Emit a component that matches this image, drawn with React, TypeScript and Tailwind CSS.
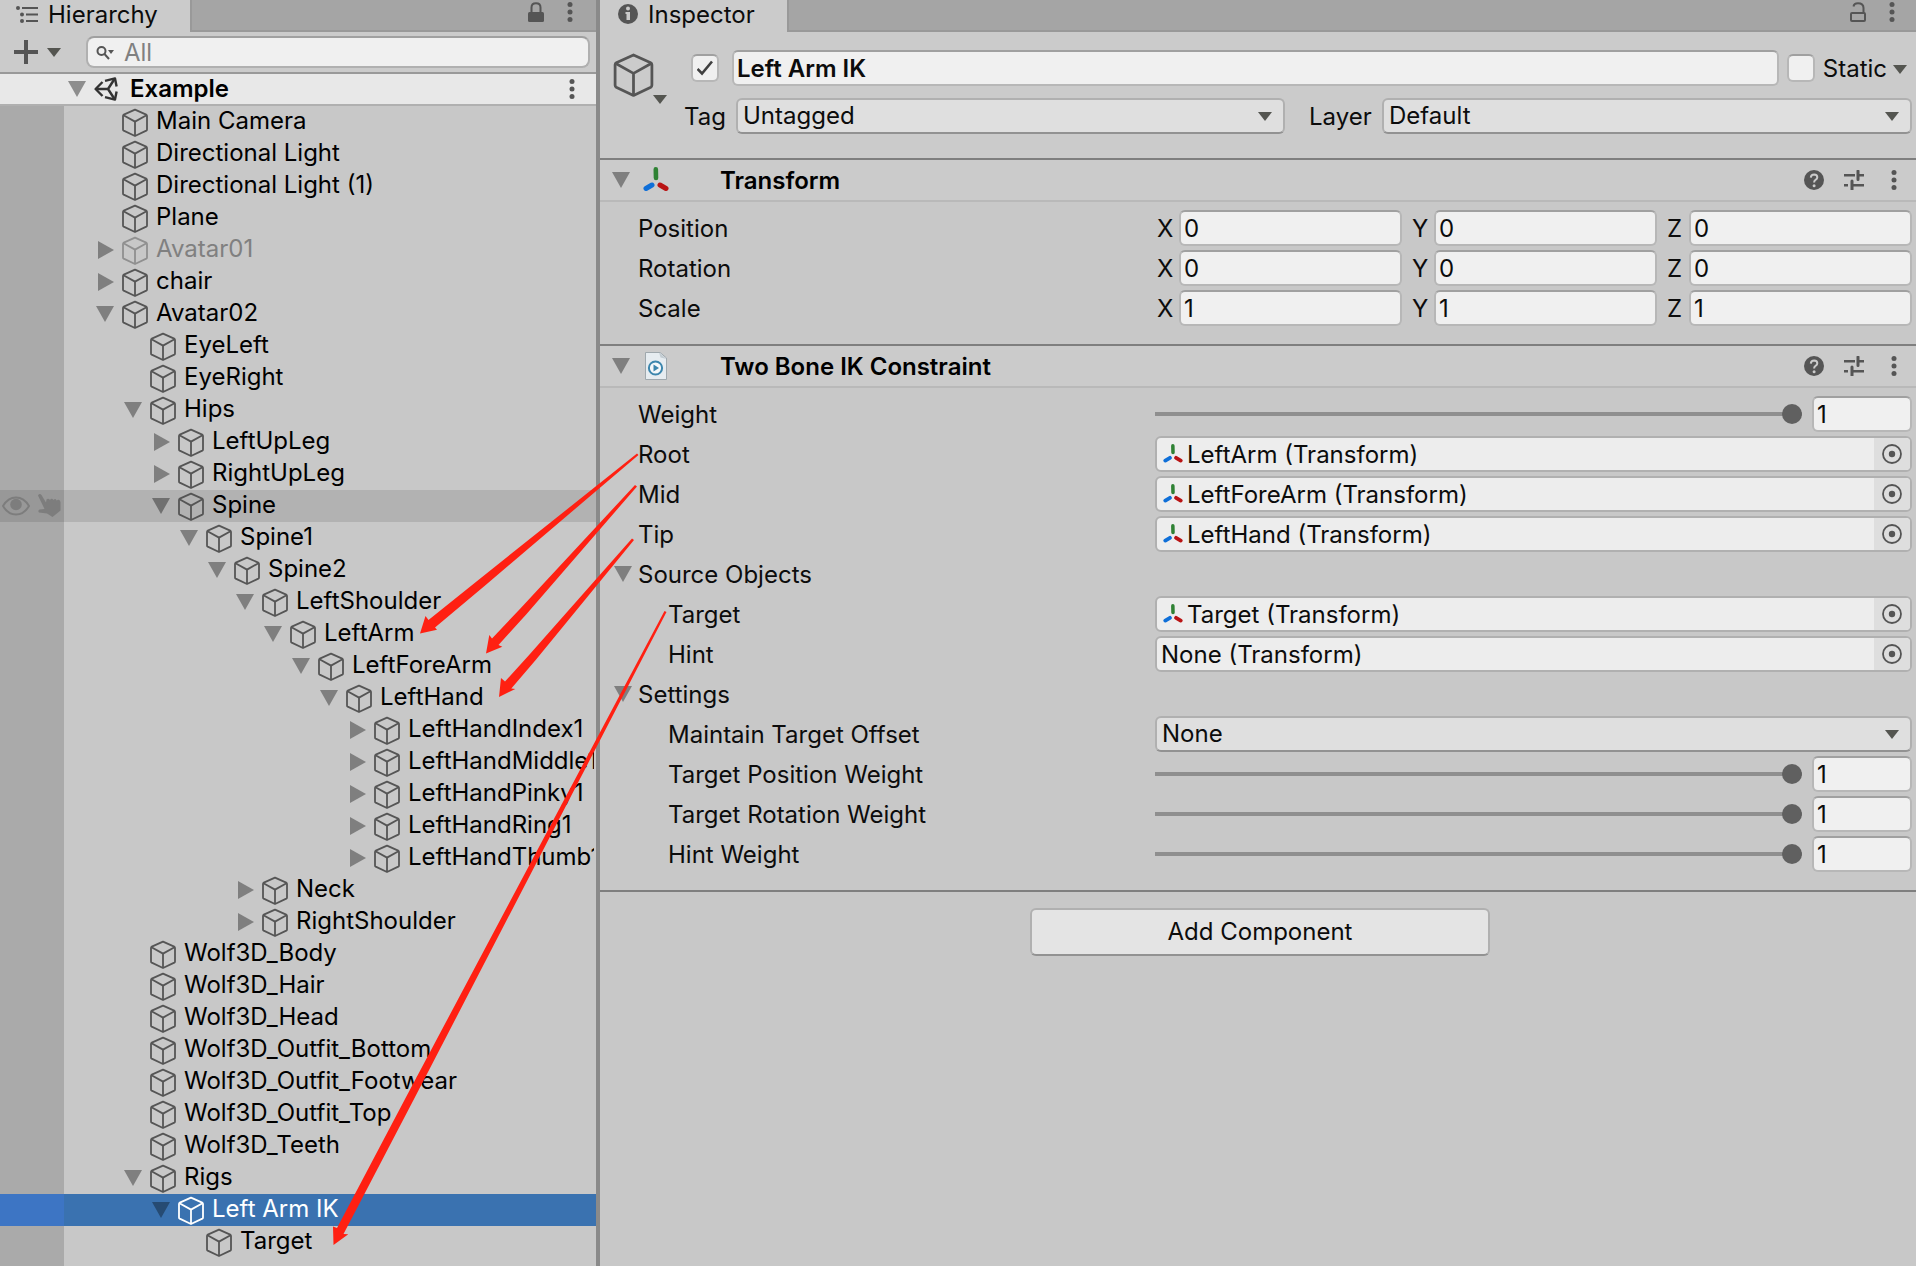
import { useState } from 'react';
import type { ReactNode } from 'react';

type TreeNode = {
  name: string;
  level: number;
  fold?: 'open' | 'closed';
  inactive?: boolean;
  state?: 'hover' | 'selected';
};

const nodes: TreeNode[] = [
  { name: 'Main Camera', level: 0 },
  { name: 'Directional Light', level: 0 },
  { name: 'Directional Light (1)', level: 0 },
  { name: 'Plane', level: 0 },
  { name: 'Avatar01', level: 0, fold: 'closed', inactive: true },
  { name: 'chair', level: 0, fold: 'closed' },
  { name: 'Avatar02', level: 0, fold: 'open' },
  { name: 'EyeLeft', level: 1 },
  { name: 'EyeRight', level: 1 },
  { name: 'Hips', level: 1, fold: 'open' },
  { name: 'LeftUpLeg', level: 2, fold: 'closed' },
  { name: 'RightUpLeg', level: 2, fold: 'closed' },
  { name: 'Spine', level: 2, fold: 'open', state: 'hover' },
  { name: 'Spine1', level: 3, fold: 'open' },
  { name: 'Spine2', level: 4, fold: 'open' },
  { name: 'LeftShoulder', level: 5, fold: 'open' },
  { name: 'LeftArm', level: 6, fold: 'open' },
  { name: 'LeftForeArm', level: 7, fold: 'open' },
  { name: 'LeftHand', level: 8, fold: 'open' },
  { name: 'LeftHandIndex1', level: 9, fold: 'closed' },
  { name: 'LeftHandMiddle1', level: 9, fold: 'closed' },
  { name: 'LeftHandPinky1', level: 9, fold: 'closed' },
  { name: 'LeftHandRing1', level: 9, fold: 'closed' },
  { name: 'LeftHandThumb1', level: 9, fold: 'closed' },
  { name: 'Neck', level: 5, fold: 'closed' },
  { name: 'RightShoulder', level: 5, fold: 'closed' },
  { name: 'Wolf3D_Body', level: 1 },
  { name: 'Wolf3D_Hair', level: 1 },
  { name: 'Wolf3D_Head', level: 1 },
  { name: 'Wolf3D_Outfit_Bottom', level: 1 },
  { name: 'Wolf3D_Outfit_Footwear', level: 1 },
  { name: 'Wolf3D_Outfit_Top', level: 1 },
  { name: 'Wolf3D_Teeth', level: 1 },
  { name: 'Rigs', level: 1, fold: 'open' },
  { name: 'Left Arm IK', level: 2, fold: 'open', state: 'selected' },
  { name: 'Target', level: 3 },
];

// Icons

function Cube({ className }: { className: string }) {
  return (
    <svg className={className} viewBox="0 0 28 30" fill="none" stroke="currentColor" strokeWidth="1.8" strokeLinejoin="round">
      <path d="M14 2.6 25.2 7.6Q26 8 26 9V22.400Q26 23.200 25.300 23.600L14 29 2.700 23.600Q2 23.200 2 22.400V9Q2 8 2.800 7.600Z" />
      <path d="M2.500 8.200 14 14.600 25.500 8.200M14 14.600V28.800" />
    </svg>
  );
}

function Triangle({ open, className = '' }: { open: boolean; className?: string }) {
  return (
    <svg className={`size-[18px] ${className}`} viewBox="0 0 18 18" fill="currentColor">
      {open ? <path d="M0 1H18L9 17Z" /> : <path d="M2 0V18L18 9Z" />}
    </svg>
  );
}

function Caret({ className = '' }: { className?: string }) {
  return (
    <svg className={`h-[9px] w-[14px] shrink-0 text-[#545550] ${className}`} viewBox="0 0 14 9" fill="currentColor">
      <path d="M0 0H14L7 9Z" />
    </svg>
  );
}

function Dots() {
  return (
    <svg className="h-5 w-1.5" viewBox="0 0 6 20" fill="#555">
      <circle cx="3" cy="2.6" r="2.5" />
      <circle cx="3" cy="10" r="2.5" />
      <circle cx="3" cy="17.4" r="2.5" />
    </svg>
  );
}

function Axes({ className }: { className: string }) {
  return (
    <svg className={className} viewBox="0 0 26 26" strokeLinecap="round">
      <path d="M12.8 2.4 13 11" stroke="#2f8234" strokeWidth="4.6" />
      <path d="M9 18 3 21.500" stroke="#0f6fd8" strokeWidth="5" />
      <path d="M17 18 23 21.500" stroke="#b91414" strokeWidth="5" />
    </svg>
  );
}

function ScriptIcon() {
  return (
    <svg className="h-7 w-[22px]" viewBox="0 0 22 28">
      <path d="M.5 .5H15L21.500 6V27.500H.5Z" fill="#e6ecf0" stroke="#9fa8ad" />
      <path d="M14 .5 15.500 5.500 21.500 7Z" fill="#c3ccd2" />
      <circle cx="10.500" cy="16" r="6.600" fill="#f4f8fa" stroke="#3c86ad" strokeWidth="2" />
      <path d="M8.500 12.500 14 16 8.500 19.500Z" fill="#3c86ad" />
    </svg>
  );
}

function HelpIcon() {
  return (
    <svg className="size-5" viewBox="0 0 20 20" fill="none">
      <circle cx="10" cy="10" r="10" fill="#555" />
      <path d="M6.800 7.600Q7 4.400 10.200 4.400 13.300 4.500 13.300 7.300 13.300 8.900 11.500 9.900 10.100 10.700 10.100 12.600" stroke="#cbcbcb" strokeWidth="2" />
      <circle cx="10.100" cy="15.700" r="1.500" fill="#cbcbcb" />
    </svg>
  );
}

function PresetIcon() {
  return (
    <svg className="size-5" viewBox="0 0 20 20" fill="none" stroke="#555" strokeWidth="2.400">
      <path d="M0 5.200H11M14 5.200H20M0 15.200H4M8 15.200H20" />
      <path d="M14 1V9.500M8 11V19.500" strokeWidth="3" strokeLinecap="round" />
    </svg>
  );
}

function LockIcon({ locked }: { locked: boolean }) {
  return locked ? (
    <svg className="h-5 w-4" viewBox="0 0 16 20">
      <path d="M3.500 11V5.500Q3.500 1.200 8 1.200T12.500 5.500V11" fill="none" stroke="#555" strokeWidth="2" />
      <rect y="10" width="16" height="10" rx="1.500" fill="#555" />
    </svg>
  ) : (
    <svg className="h-5 w-4" viewBox="0 0 16 20" fill="none" stroke="#555" strokeWidth="2">
      <path d="M3.500 4.500Q4 1.200 8 1.200 13.500 1.200 13.500 6V11" />
      <rect x="1" y="11" width="14" height="8" rx="1" />
    </svg>
  );
}

// Shared controls

const fieldClass =
  'h-9 w-full min-w-0 rounded-md border-2 border-[#b7b7b7] border-t-[#a0a0a0] bg-[#f0f0f0] px-[3px] text-[24px] leading-8 text-[#0c0c0c] outline-none';

function Tab({ icon, title }: { icon: ReactNode; title: string }) {
  return (
    <div className="relative z-10 flex h-8 items-start gap-2.5 border-r-2 border-[#999] bg-[#cbcbcb] pr-8 pl-4">
      <span className="flex h-7 items-center">{icon}</span>
      <h2 className="leading-[30px]">{title}</h2>
    </div>
  );
}

function Select({ id, value, className = '' }: { id: string; value: string; className?: string }) {
  return (
    <div className={`relative ${className}`}>
      <select
        id={id}
        className="h-9 w-full appearance-none rounded-md border-2 border-[#b0b0b0] border-b-[#929292] bg-[#dfdfdf] px-[5px] text-[24px] leading-8 text-[#0c0c0c] outline-none"
      >
        <option>{value}</option>
      </select>
      <Caret className="pointer-events-none absolute top-3.5 right-[13px]" />
    </div>
  );
}

function CheckBox({ id, label, defaultChecked }: { id: string; label: string; defaultChecked?: boolean }) {
  return (
    <span className="relative size-7 shrink-0">
      <input
        id={id}
        type="checkbox"
        aria-label={label}
        defaultChecked={defaultChecked}
        className="peer block size-7 appearance-none rounded-md border-2 border-[#b7b7b7] border-t-[#a0a0a0] bg-[#f0f0f0]"
      />
      <svg
        className="pointer-events-none absolute top-1.5 left-1.5 hidden size-4 peer-checked:block"
        viewBox="0 0 16 16"
        fill="none"
        stroke="#404040"
        strokeWidth="2.600"
      >
        <path d="M.5 9 5 13.500 15 1.500" />
      </svg>
    </span>
  );
}

function Row({ label, htmlFor, nested, children }: { label: string; htmlFor?: string; nested?: boolean; children: ReactNode }) {
  return (
    <div className="grid h-9 grid-cols-[517fr_757fr] items-center pr-1 pl-[38px]">
      <label htmlFor={htmlFor} className={`pt-0.5 ${nested ? 'pl-[30px]' : ''}`}>
        {label}
      </label>
      {children}
    </div>
  );
}

function VectorRow({ label, value }: { label: string; value: string }) {
  return (
    <Row label={label}>
      <div className="grid grid-cols-3 gap-2">
        {['X', 'Y', 'Z'].map((axis) => (
          <label key={axis} className="flex items-center">
            <span className="w-6 shrink-0 pt-0.5 pl-0.5">{axis}</span>
            <input className={fieldClass} defaultValue={value} aria-label={`${label} ${axis}`} />
          </label>
        ))}
      </div>
    </Row>
  );
}

function SliderRow({ label, nested }: { label: string; nested?: boolean }) {
  const [value, setValue] = useState('1');
  const id = label.toLowerCase().replace(/ /g, '-');

  return (
    <Row label={label} htmlFor={id} nested={nested}>
      <div className="flex items-center gap-2.5">
        <input
          id={id}
          type="range"
          min="0"
          max="1"
          step="0.01"
          value={value}
          onChange={(e) => setValue(e.target.value)}
          className="h-5 min-w-0 flex-1 appearance-none bg-transparent bg-[linear-gradient(#8f8f8f,#8f8f8f)] bg-[length:100%_4px] bg-center bg-no-repeat [&::-webkit-slider-thumb]:size-5 [&::-webkit-slider-thumb]:appearance-none [&::-webkit-slider-thumb]:rounded-full [&::-webkit-slider-thumb]:bg-[#606060]"
        />
        <div className="w-[100px]">
          <input className={fieldClass} value={value} aria-label={`${label} value`} onChange={(e) => setValue(e.target.value)} />
        </div>
      </div>
    </Row>
  );
}

function ObjectRow({ label, value, nested }: { label: string; value: string | null; nested?: boolean }) {
  return (
    <Row label={label} nested={nested}>
      <div className="flex h-9 overflow-hidden rounded-md border-2 border-[#b0b0b0] bg-[#ededed] text-[#0c0c0c]">
        <span className="flex flex-1 items-center gap-1 pl-1">
          {value && <Axes className="ml-0.5 size-5" />}
          <span className="pt-0.5">{value ?? 'None'} (Transform)</span>
        </span>
        <button aria-label={`Select ${label}`} className="flex w-9 items-center justify-center bg-[#dedede]">
          <svg className="size-5" viewBox="0 0 20 20">
            <circle cx="10" cy="10" r="9" fill="none" stroke="#555" strokeWidth="1.800" />
            <circle cx="10" cy="10" r="3.200" fill="#555" />
          </svg>
        </button>
      </div>
    </Row>
  );
}

function FoldoutRow({ label }: { label: string }) {
  return (
    <button className="flex h-9 items-center gap-1.5 pl-3.5 text-left">
      <Triangle open className="text-[#7f7f7f]" />
      <span className="pt-0.5">{label}</span>
    </button>
  );
}

function Component({ title, icon, children }: { title: string; icon: ReactNode; children: ReactNode }) {
  return (
    <section className="border-b-2 border-[#7f7f7f]">
      <header className="flex h-[42px] items-center border-b-2 border-[#b9b9b9] bg-[#cbcbcb] pr-[19px] pl-3">
        <Triangle open className="text-[#7f7f7f]" />
        <span className="ml-2.5 flex w-8 justify-center">{icon}</span>
        <h3 className="ml-12 flex-1 pt-0.5 font-semibold text-black">{title}</h3>
        <div className="flex items-center">
          <button aria-label="Help">
            <HelpIcon />
          </button>
          <button aria-label="Presets" className="ml-5">
            <PresetIcon />
          </button>
          <button aria-label="More" className="ml-[27px]">
            <Dots />
          </button>
        </div>
      </header>
      <div className="flex flex-col gap-1 pt-2 pb-[18px]">{children}</div>
    </section>
  );
}

// Panels

function TreeRow({ node }: { node: TreeNode }) {
  const selected = node.state === 'selected';
  const hover = node.state === 'hover';
  const rowBg = selected ? 'bg-[#3a72b0] text-white' : hover ? 'bg-[#b2b2b2] text-black' : 'text-black';
  const gutterBg = selected ? 'bg-[#3d75c4]' : hover ? 'bg-[#989898]' : 'bg-[#aaa]';
  const foldColor = selected ? 'text-[#264b73]' : hover ? 'text-[#707070]' : 'text-[#7f7f7f]';
  const cubeColor = selected ? 'text-white' : node.inactive ? 'text-[#909090]' : 'text-[#555]';

  return (
    <li className={`flex h-8 ${rowBg}`}>
      <span className={`flex w-16 shrink-0 items-center gap-2 pl-0.5 ${gutterBg}`}>
        {hover && (
          <>
            <svg className="h-5 w-7" viewBox="0 0 28 20" fill="none" stroke="#7d7d7d" strokeWidth="2">
              <path d="M1 10Q6 1.500 14 1.500T27 10Q22 18.500 14 18.500T1 10Z" />
              <circle cx="14" cy="8.500" r="5.800" fill="#7d7d7d" stroke="none" />
            </svg>
            <svg className="size-6" viewBox="0 0 24 24" fill="#7d7d7d">
              <path d="M0 1.500Q1.500-1 3.500 1L8 8.500 8.500 5.500Q10.500 4 12 6 13.500 3.500 15.500 6 17.500 4 18.500 6.500 21.500 4.500 22.500 8L22.500 16.500 14.500 23 9 19.500 1 18.500Q-.5 16.500 1.500 15.500L6.500 15Z" />
            </svg>
          </>
        )}
      </span>
      <div className="mr-0.5 flex min-w-0 flex-1 items-center overflow-hidden">
        <span className="w-[26px] shrink-0" />
        {Array.from({ length: node.level }, (_, i) => (
          <span key={i} className="w-7 shrink-0" />
        ))}
        <button aria-label={`Toggle ${node.name}`} className={`flex w-[30px] shrink-0 justify-center ${foldColor}`}>
          {node.fold && <Triangle open={node.fold === 'open'} />}
        </button>
        <Cube className={`mx-px h-[30px] w-7 shrink-0 ${cubeColor}`} />
        <span className={`ml-1.5 h-8 leading-[30px] whitespace-nowrap ${node.inactive ? 'text-[#808080]' : ''}`}>{node.name}</span>
      </div>
    </li>
  );
}

function Hierarchy() {
  return (
    <aside className="w-[600px] shrink-0 border-r-4 border-[#8a8a8a]">
      <div className="flex h-8 items-start justify-between bg-[#a5a5a5] shadow-[inset_0_-2px_#999]">
        <Tab
          title="Hierarchy"
          icon={
            <svg className="h-5 w-[22px]" viewBox="0 0 22 20" fill="#555">
              <circle cx="2" cy="4" r="2" />
              <circle cx="6" cy="10.500" r="2" />
              <circle cx="6" cy="17" r="2" />
              <path d="M6 3H22V5H6ZM10 9.500H22V11.500H10ZM10 16H22V18H10Z" />
            </svg>
          }
        />
        <div className="flex items-center gap-[23px] pt-0.5 pr-[23px]">
          <button aria-label="Lock">
            <LockIcon locked />
          </button>
          <button aria-label="Hierarchy menu">
            <Dots />
          </button>
        </div>
      </div>

      <div className="flex h-[42px] items-center border-b-2 border-[#999] bg-[#cbcbcb] pr-1.5 pl-3.5">
        <button aria-label="Create" className="flex items-center gap-[9px]">
          <svg className="size-6" viewBox="0 0 24 24" stroke="#555" strokeWidth="4">
            <path d="M12 0V24M0 12H24" />
          </svg>
          <Caret />
        </button>
        <div className="relative ml-[25px] flex-1">
          <svg className="absolute top-2.5 left-2.5 h-3.5 w-5" viewBox="0 0 20 14" fill="none" stroke="#555" strokeWidth="2">
            <circle cx="5.500" cy="5" r="4" />
            <path d="M8.500 8 13 13" />
            <path d="M12 4H18L15 8Z" fill="#555" stroke="none" />
          </svg>
          <input
            aria-label="Search"
            placeholder="All"
            className="block h-8 w-full rounded-lg border-2 border-[#b0b0b0] border-t-[#a0a0a0] bg-[#f0f0f0] pl-9 text-[24px] leading-7 outline-none placeholder:text-[#808080]"
          />
        </div>
      </div>

      <div className="flex h-8 items-center border-b-2 border-[#b0b0b0] bg-[#e8e8e8] pr-[21px] pl-[68px]">
        <Triangle open className="text-[#8d8d8d]" />
        <svg className="ml-2 size-6" viewBox="0 0 24 24" fill="none" stroke="#333" strokeWidth="2.400" strokeLinejoin="round">
          <path d="M11 3.800 21 1.400 22.600 9.500M22.600 14.500 21 22.600 11 20.200M8.500 19 1.600 12 8.500 5" />
          <path d="M2 12H14M14 12 20.500 2M14 12 20.500 22" />
        </svg>
        <span className="ml-3 flex-1 leading-[30px] font-semibold text-black">Example</span>
        <button aria-label="Scene menu">
          <Dots />
        </button>
      </div>

      <div className="bg-[linear-gradient(to_right,#aaa_64px,#c8c8c8_64px)] pb-2">
        <ul>
          {nodes.map((node) => (
            <TreeRow key={node.name} node={node} />
          ))}
        </ul>
      </div>
    </aside>
  );
}

function Inspector() {
  return (
    <main className="min-w-0 flex-1">
      <div className="flex h-8 items-start justify-between bg-[#a5a5a5] shadow-[inset_0_-2px_#999]">
        <Tab
          title="Inspector"
          icon={
            <svg className="ml-0.5 size-5" viewBox="0 0 20 20">
              <circle cx="10" cy="10" r="10" fill="#555" />
              <circle cx="10" cy="4.500" r="2" fill="#cbcbcb" />
              <path d="M7.500 8H12V16H8.500V10H7.500Z" fill="#cbcbcb" />
            </svg>
          }
        />
        <div className="flex items-center gap-[23px] pt-0.5 pr-[21px]">
          <button aria-label="Lock">
            <LockIcon locked={false} />
          </button>
          <button aria-label="Inspector menu">
            <Dots />
          </button>
        </div>
      </div>

      <div className="flex h-32 border-b-2 border-[#7f7f7f] bg-[#cbcbcb] pt-[18px] pr-1 pl-3">
        <button aria-label="Object icon" className="relative h-[54px] w-[55px]">
          <Cube className="absolute top-px left-0 h-[46px] w-[43px] text-[#555]" />
          <Caret className="absolute right-0 bottom-0" />
        </button>
        <div className="flex flex-1 flex-col gap-3">
          <div className="flex items-center pl-6">
            <CheckBox id="active" label="Active" defaultChecked />
            <input className={`${fieldClass} mr-2 ml-[13px] flex-1 font-semibold`} defaultValue="Left Arm IK" aria-label="Name" />
            <CheckBox id="static" label="Static" />
            <label htmlFor="static" className="ml-2 flex items-center gap-1.5 pt-0.5 pr-[5px]">
              Static
              <Caret />
            </label>
          </div>
          <div className="flex items-center pl-[17px]">
            <label htmlFor="tag" className="w-[52px] shrink-0 pt-0.5">
              Tag
            </label>
            <Select id="tag" value="Untagged" className="flex-[549]" />
            <label htmlFor="layer" className="ml-6 w-[73px] shrink-0 pt-0.5">
              Layer
            </label>
            <Select id="layer" value="Default" className="flex-[530]" />
          </div>
        </div>
      </div>

      <Component title="Transform" icon={<Axes className="size-[26px]" />}>
        <VectorRow label="Position" value="0" />
        <VectorRow label="Rotation" value="0" />
        <VectorRow label="Scale" value="1" />
      </Component>

      <Component title="Two Bone IK Constraint" icon={<ScriptIcon />}>
        <SliderRow label="Weight" />
        <ObjectRow label="Root" value="LeftArm" />
        <ObjectRow label="Mid" value="LeftForeArm" />
        <ObjectRow label="Tip" value="LeftHand" />
        <FoldoutRow label="Source Objects" />
        <ObjectRow label="Target" value="Target" nested />
        <ObjectRow label="Hint" value={null} nested />
        <FoldoutRow label="Settings" />
        <Row label="Maintain Target Offset" htmlFor="offset" nested>
          <Select id="offset" value="None" />
        </Row>
        <SliderRow label="Target Position Weight" nested />
        <SliderRow label="Target Rotation Weight" nested />
        <SliderRow label="Hint Weight" nested />
      </Component>

      <div className="flex justify-center pt-4 pl-1">
        <button className="h-12 w-[460px] rounded-md border-2 border-[#b0b0b0] border-b-[#929292] bg-[#e4e4e4] text-[#0c0c0c]">
          Add Component
        </button>
      </div>
    </main>
  );
}

// Hand-drawn links from the constraint fields to the bones they use
function Annotations() {
  return (
    <svg className="pointer-events-none absolute top-0 left-0 h-[1266px] w-[700px]" viewBox="0 0 700 1266" fill="#ff2012">
      <path d="M637 453.500 638.500 455 484.500 586 435 627.500 437 629.700 420 633.500 425.500 616 428.500 620 479 579.500Z" />
      <path d="M635 485 637 486.500 526.600 614 498.500 645 502.300 646.700 486 653.500 489.300 635 492 638.500 520.400 608.400Z" />
      <path d="M632 538.500 634 540 535.700 660 511.300 688.500 515.300 689 499 697 501 678 505 681.500 529.300 654.700Z" />
      <path d="M664.500 611 666.500 612 413.500 1100 343.500 1234 348.300 1234.300 333.500 1245 333 1226.500 337 1228 404.500 1100Z" />
    </svg>
  );
}

export default function App() {
  return (
    <div className="relative flex min-h-screen overflow-hidden bg-[#c8c8c8] font-[Inter,sans-serif] text-[24px] leading-8 text-[#0c0c0c]">
      <Hierarchy />
      <Inspector />
      <Annotations />
    </div>
  );
}
